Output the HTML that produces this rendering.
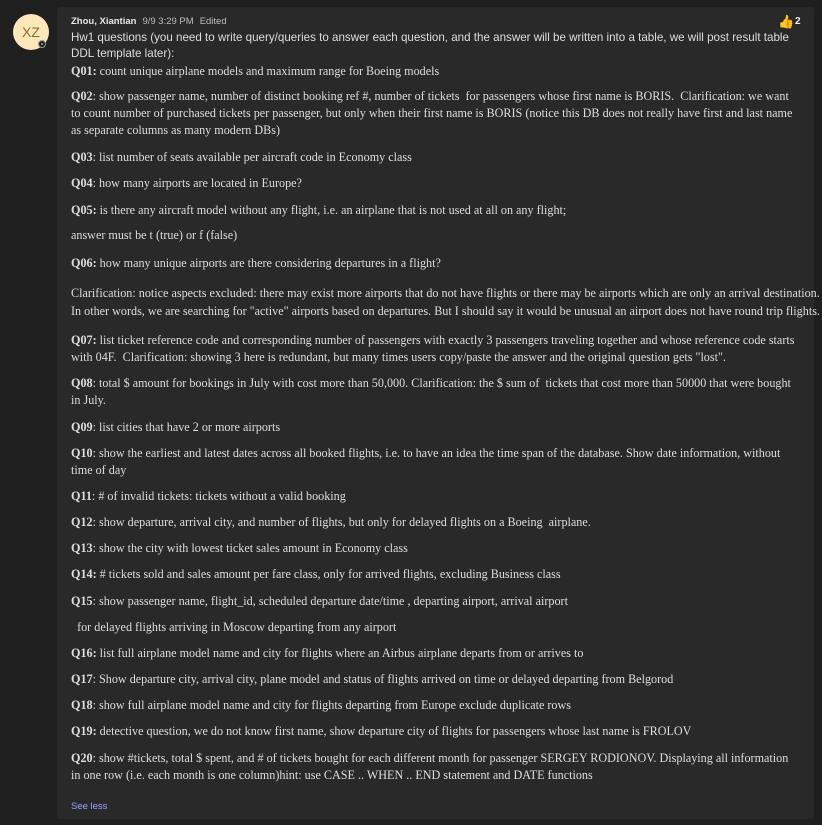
<!DOCTYPE html>
<html><head><meta charset="utf-8"><style>
body{margin:0;width:822px;height:825px;background:#1f1f1f;overflow:hidden;position:relative;color:#dcdcdc}
.card{position:absolute;left:57px;top:7px;width:757px;height:812px;background:#292929;border-radius:4px}
.av{position:absolute;left:13px;top:14px;width:36px;height:36px;border-radius:50%;background:#fbe7b9;color:#8d6c2e;font:14px "Liberation Sans",sans-serif;text-align:center;line-height:36px}
.st{position:absolute;left:38px;top:40px;width:8px;height:8px;border-radius:50%;background:#1f1f1f;border:1px solid #999;box-sizing:border-box}
.st:after{content:"";position:absolute;left:2px;top:2px;width:2px;height:2px;border-radius:50%;background:#999}
.l{position:absolute;left:71px;white-space:nowrap;font:12.15px/16px "Liberation Serif",serif;color:#dedede}
.s{font-family:"Liberation Sans",sans-serif;font-size:11.6px}
b{font-weight:bold}
.h{font:bold 9.5px/16px "Liberation Sans",sans-serif;color:#e8e8e8}
.h span{font-weight:normal;color:#bdbdbd;margin-left:6px}
</style></head><body>
<div class="av">XZ</div><div class="st"></div>
<div class="card"></div>
<div class="l h" style="top:14px">Zhou, Xiantian<span>9/9 3:29 PM</span><span>Edited</span></div>
<div style="position:absolute;left:778px;top:15px;font:13px 'DejaVu Sans',sans-serif;color:#f2b73a">👍</div>
<div style="position:absolute;left:795px;top:16px;font:bold 10px 'Liberation Sans',sans-serif;color:#eee">2</div>
<div class="l s" style="top:30px">Hw1 questions (you need to write query/queries to answer each question, and the answer will be written into a table, we will post result table</div>
<div class="l s" style="top:46px">DDL template later):</div>
<div class="l" style="top:63px"><b>Q01:</b> count unique airplane models and maximum range for Boeing models</div>
<div class="l" style="top:88px"><b>Q02</b>: show passenger name, number of distinct booking ref #, number of tickets&nbsp; for passengers whose first name is BORIS.&nbsp; Clarification: we want</div>
<div class="l" style="top:105px">to count number of purchased tickets per passenger, but only when their first name is BORIS (notice this DB does not really have first and last name</div>
<div class="l" style="top:122px">as separate columns as many modern DBs)</div>
<div class="l" style="top:149px"><b>Q03</b>: list number of seats available per aircraft code in Economy class</div>
<div class="l" style="top:175px"><b>Q04</b>: how many airports are located in Europe?</div>
<div class="l" style="top:202px"><b>Q05:</b> is there any aircraft model without any flight, i.e. an airplane that is not used at all on any flight;</div>
<div class="l" style="top:227px">answer must be t (true) or f (false)</div>
<div class="l" style="top:255px"><b>Q06:</b> how many unique airports are there considering departures in a flight?</div>
<div class="l" style="top:285px">Clarification: notice aspects excluded: there may exist more airports that do not have flights or there may be airports which are only an arrival destination.</div>
<div class="l" style="top:303px">In other words, we are searching for "active" airports based on departures. But I should say it would be unusual an airport does not have round trip flights.</div>
<div class="l" style="top:332px"><b>Q07:</b> list ticket reference code and corresponding number of passengers with exactly 3 passengers traveling together and whose reference code starts</div>
<div class="l" style="top:349px">with 04F.&nbsp; Clarification: showing 3 here is redundant, but many times users copy/paste the answer and the original question gets "lost".</div>
<div class="l" style="top:375px"><b>Q08</b>: total $ amount for bookings in July with cost more than 50,000. Clarification: the $ sum of&nbsp; tickets that cost more than 50000 that were bought</div>
<div class="l" style="top:392px">in July.</div>
<div class="l" style="top:419px"><b>Q09</b>: list cities that have 2 or more airports</div>
<div class="l" style="top:445px"><b>Q10</b>: show the earliest and latest dates across all booked flights, i.e. to have an idea the time span of the database. Show date information, without</div>
<div class="l" style="top:462px">time of day</div>
<div class="l" style="top:488px"><b>Q11</b>: # of invalid tickets: tickets without a valid booking</div>
<div class="l" style="top:514px"><b>Q12</b>: show departure, arrival city, and number of flights, but only for delayed flights on a Boeing&nbsp; airplane.</div>
<div class="l" style="top:540px"><b>Q13</b>: show the city with lowest ticket sales amount in Economy class</div>
<div class="l" style="top:566px"><b>Q14:</b> # tickets sold and sales amount per fare class, only for arrived flights, excluding Business class</div>
<div class="l" style="top:593px"><b>Q15</b>: show passenger name, flight_id, scheduled departure date/time , departing airport, arrival airport</div>
<div class="l" style="top:619px">&nbsp; for delayed flights arriving in Moscow departing from any airport</div>
<div class="l" style="top:645px"><b>Q16:</b> list full airplane model name and city for flights where an Airbus airplane departs from or arrives to</div>
<div class="l" style="top:671px"><b>Q17</b>: Show departure city, arrival city, plane model and status of flights arrived on time or delayed departing from Belgorod</div>
<div class="l" style="top:697px"><b>Q18</b>: show full airplane model name and city for flights departing from Europe exclude duplicate rows</div>
<div class="l" style="top:723px"><b>Q19:</b> detective question, we do not know first name, show departure city of flights for passengers whose last name is FROLOV</div>
<div class="l" style="top:750px"><b>Q20</b>: show #tickets, total $ spent, and # of tickets bought for each different month for passenger SERGEY RODIONOV. Displaying all information</div>
<div class="l" style="top:767px">in one row (i.e. each month is one column)hint: use CASE .. WHEN .. END statement and DATE functions</div>
<div class="l" style="top:799px;font:9.5px/16px 'Liberation Sans',sans-serif;color:#9ea2ff">See less</div>
</body></html>
